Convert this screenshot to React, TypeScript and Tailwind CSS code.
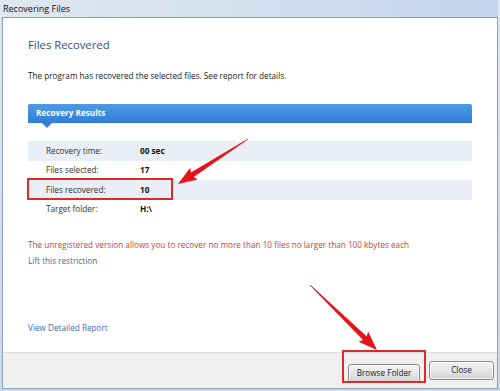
import React from 'react';

const font = { fontFamily: '"Open Sans", "Noto Sans", "Liberation Sans", "Noto Sans CJK SC", sans-serif' };

// tapered annotation arrow, tail -> tip
function Arrow({ x1, y1, x2, y2 }: { x1: number; y1: number; x2: number; y2: number }) {
  const dx = x2 - x1;
  const dy = y2 - y1;
  const len = Math.hypot(dx, dy);
  const ux = dx / len;
  const uy = dy / len;
  const nx = -uy;
  const ny = ux;
  const head = 17;
  const hw = 7;
  const sw = 2.6;
  const bx = x2 - ux * head;
  const by = y2 - uy * head;
  const pts = [
    [x1 + nx * 0.4, y1 + ny * 0.4],
    [bx + nx * sw, by + ny * sw],
    [bx + nx * hw - ux * 2, by + ny * hw - uy * 2],
    [x2, y2],
    [bx - nx * hw - ux * 2, by - ny * hw - uy * 2],
    [bx - nx * sw, by - ny * sw],
    [x1 - nx * 0.4, y1 - ny * 0.4],
  ];
  return <polygon points={pts.map((p) => p.join(',')).join(' ')} fill="#e3151b" />;
}

const rows = [
  { label: 'Recovery time:', value: '00 sec', shade: true },
  { label: 'Files selected:', value: '17', shade: false },
  { label: 'Files recovered:', value: '10', shade: true, boxed: true },
  { label: 'Target folder:', value: 'H:\\', shade: false },
];

function WinButton({ label, width }: { label: string; width: string }) {
  return (
    <button
      type="button"
      className={`${width} h-[19px] rounded-[3px] border border-[#8a8a8a] bg-gradient-to-b from-[#f4f4f4] via-[#e6e6e6] to-[#d3d3d3] text-[8.2px] text-[#222] shadow-[inset_0_0_0_1px_rgba(255,255,255,0.7)]`}
    >
      {label}
    </button>
  );
}

export default function App() {
  return (
    <div style={font} className="relative w-[500px] h-[391px] overflow-hidden bg-gradient-to-b from-[#dfe8f3] to-[#c9d8ea] flex flex-col px-[2px] pb-[2px]">
      <div className="h-[17px] shrink-0 flex items-center pl-[1px] text-[9px] text-[#111] bg-gradient-to-r from-[#dfe7f1] via-[#d3dfed] to-[#c3d5ec]">
        Recovering Files
      </div>
      <div className="flex-1 flex flex-col border border-[#8f9db0] bg-white">
        <div className="flex-1 flex flex-col px-[25px] pt-[19px]">
          <h1 className="text-[11.3px] leading-[16px] text-[#2d4f8f]">Files Recovered</h1>
          <p className="mt-[17px] text-[8.2px] leading-[12px] text-[#1a1a1a]">
            The program has recovered the selected files. See report for details.
          </p>

          <div className="relative mt-[22px] h-[19px] flex items-center pl-[8px] rounded-t-[2px] bg-gradient-to-b from-[#4f9ae6] to-[#2f7fd8] text-[8.2px] font-bold text-white">
            Recovery Results
            <div className="absolute left-[14px] top-[19px] w-0 h-0 border-l-[5px] border-r-[5px] border-t-[5px] border-l-transparent border-r-transparent border-t-[#3281d9]" />
          </div>

          <div className="mt-[18px] flex flex-col">
            {rows.map((r) => (
              <div
                key={r.label}
                className={`relative h-[19.5px] flex items-center text-[8.2px] ${r.shade ? 'bg-[#e9eef7]' : ''}`}
              >
                <span className="w-[112px] pl-[18px] text-[#333]">{r.label}</span>
                <span className="font-bold text-[#111]">{r.value}</span>
                {r.boxed && (
                  <div className="absolute left-[-1px] top-[-2px] w-[146px] h-[22px] border-2 border-[#df2a2a]" />
                )}
              </div>
            ))}
          </div>

          <p className="mt-[20px] text-[8.2px] leading-[12px] text-[#c9442f]">
            The unregistered version allows you to recover no more than 10 files no larger than 100 kbytes each
          </p>
          <a className="mt-[4px] text-[8.2px] leading-[12px] text-[#3b6db3]">Lift this restriction</a>
          <a className="mt-[55px] text-[8.2px] leading-[12px] text-[#3b6db3]">View Detailed Report</a>
        </div>
        <div className="h-[36px] shrink-0 flex items-center justify-end gap-[9px] pr-[3px] border-t border-[#dcdcdc] bg-[#f0f0f0]">
          <div className="relative">
            <WinButton label="Browse Folder" width="w-[72px]" />
            <div className="absolute left-[-6px] top-[-8px] w-[84px] h-[33px] border-2 border-[#df2a2a]" />
          </div>
          <WinButton label="Close" width="w-[65px]" />
        </div>
      </div>
      <svg className="absolute inset-0 pointer-events-none" width="500" height="391">
        <Arrow x1={248} y1={139} x2={178} y2={184} />
        <Arrow x1={310} y1={285} x2={377} y2={350} />
      </svg>
    </div>
  );
}
